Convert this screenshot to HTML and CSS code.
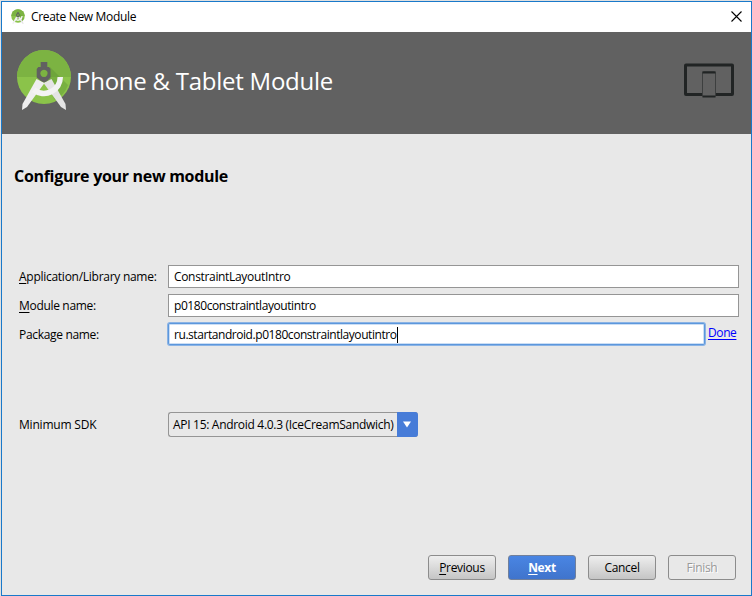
FILE: index.html
```html
<!DOCTYPE html>
<html lang="en">
<head>
<meta charset="utf-8">
<title>Create New Module</title>
<link rel="stylesheet" href="styles.css">
</head>
<body>
<svg width="0" height="0" class="defs" aria-hidden="true">
  <symbol id="studio" viewBox="0 0 56 62">
    <circle cx="28" cy="28" r="27" fill="#8bc34a"/>
    <path d="M1 28a27 27 0 0 1 54 0z" fill="#7cb342"/>
    <path d="M34 18l18 18a27 27 0 0 1-13 15L28 33z" fill="#558b2f" opacity=".35"/>
    <path d="M20.500 30l8 4L11 58l-5 3 .5-6z" fill="#eee"/>
    <path d="M35.500 30l-8 4L45 58l5 3-.5-6z" fill="#e4e4e4"/>
    <path d="M47 28A19 19 0 0 1 16 43l3.500-4.500A13.500 13.500 0 0 0 41.500 28z" fill="#f3f3f3"/>
    <path fill-rule="evenodd" d="M24.700 13h6.600v5h1.700l1.500 2v8.500L31 32l-3 1.500-3-1.500-4.300-3.500V20l1.600-2h2.400zm3.300 7.700a3.700 3.700 0 1 0 .01 0z" fill="#616161"/>
  </symbol>
</svg>
<div class="window">
  <div class="titlebar">
    <svg class="app-icon"><use href="#studio"/></svg>
    <span class="caption">Create New Module</span>
    <svg class="close" viewBox="0 0 11 11"><path d="M.5.5l10 10M10.500.5l-10 10" stroke="#000" stroke-width="1.100" fill="none"/></svg>
  </div>
  <header class="banner">
    <svg class="logo"><use href="#studio"/></svg>
    <h1>Phone &amp; Tablet Module</h1>
    <svg class="devices" viewBox="0 0 52 36">
      <rect x="2.500" y="2" width="47" height="29.500" rx=".5" fill="none" stroke="#212424" stroke-width="3"/>
      <rect x="19.500" y="8.500" width="13" height="25" rx="1" fill="#616161" stroke="#3d3f3f"/>
      <path d="M19.500 9.500h13M19.500 33.500h13" stroke="#212424" stroke-width="2"/>
    </svg>
  </header>
  <main>
    <h2>Configure your new module</h2>
    <div class="fields">
      <div class="row"><label class="l-app"><u>A</u>pplication/Library name:</label><div class="input"><span class="v-app">ConstraintLayoutIntro</span></div></div>
      <div class="row"><label class="l-mod"><u>M</u>odule name:</label><div class="input"><span class="v-mod">p0180constraintlayoutintro</span></div></div>
      <div class="row"><label class="l-mod">Package name:</label><div class="input focused"><span class="v-pkg">ru.startandroid.p0180constraintlayoutintro</span><i class="caret"></i></div><a class="done">Done</a></div>
    </div>
    <div class="row sdk"><label class="l-sdk">Minimum SDK</label>
      <div class="combo"><span class="v-sdk">API 15: Android 4.0.3 (IceCreamSandwich)</span><b class="arrow"><svg viewBox="0 0 8 7"><path d="M0 .5h8l-4 6z" fill="#fff"/></svg></b></div>
    </div>
    <footer>
      <div class="button"><span><u>P</u>revious</span></div>
      <div class="button primary"><span><u>N</u>ext</span></div>
      <div class="button"><span>Cancel</span></div>
      <div class="button disabled"><span>Finish</span></div>
    </footer>
  </main>
</div>
</body>
</html>
```
FILE: styles.css
```css
* { box-sizing: border-box; }
body { margin: 0; width: 752px; height: 596px; overflow: hidden; background: #e0e0e0; font: 12px/16px "Open Sans", "Noto Sans", sans-serif; color: #000; padding: 1px 0 0 1px; }
.defs { display: none; }
.window { width: 751px; height: 595px; border: 1px solid #1979ca; background: #e8e8e8; display: flex; flex-direction: column; }
.titlebar { height: 30px; background: #fff; display: flex; align-items: center; padding: 0 9.500px 0 9px; }
.app-icon { width: 14px; height: 15.500px; }
.caption { margin-left: 6px; letter-spacing: -.33px; white-space: nowrap; }
.close { width: 11px; height: 11px; margin: -1px 0 0 auto; }
.banner { height: 102px; background: #616161; display: flex; align-items: center; padding: 0 16px 0 14px; }
.logo { width: 56px; height: 62px; margin-top: -6px; }
h1 { margin: -4px 0 0 4px; font-size: 24px; line-height: 32px; font-weight: 400; letter-spacing: -.25px; color: #fff; white-space: nowrap; }
.devices { width: 52px; height: 36px; margin: -4px 0 0 auto; }
main { flex: 1; display: flex; flex-direction: column; }
h2 { margin: 31px 0 0 12px; font-size: 16px; line-height: 22px; font-weight: 700; letter-spacing: -.3px; white-space: nowrap; }
.fields { margin-top: 78px; display: flex; flex-direction: column; gap: 6px; }
.row { display: flex; align-items: center; height: 23px; padding: 0 12px 0 17px; white-space: nowrap; }
label { width: 149px; flex: none; }
.l-app { letter-spacing: -.27px; }
.l-mod { letter-spacing: -.32px; }
.l-sdk { letter-spacing: -.2px; }
.v-app { letter-spacing: -.33px; }
.v-mod { letter-spacing: -.42px; }
.v-pkg { letter-spacing: -.44px; }
.v-sdk { letter-spacing: -.3px; }
u { text-decoration: underline; text-underline-offset: 2px; text-decoration-thickness: 1px; text-decoration-skip-ink: none; }
.input { flex: 1; height: 23px; border: 1px solid #959595; background: #fff; display: flex; align-items: center; padding-left: 5px; }
.input.focused { height: 22px; padding-top: 1px; margin-top: -1px; border-color: #5c97dc; border-radius: 2px; box-shadow: 0 0 0 1px #8ab3e5, inset 0 0 0 1px #cbdef5; flex: 0 0 537px; }
.caret { width: 1px; height: 16px; background: #000; }
.done { color: #00f; margin: -3px 0 0 3px; letter-spacing: -.4px; text-decoration: underline; text-underline-offset: 2px; text-decoration-thickness: 1px; }
.sdk { margin-top: 66px; height: 25px; }
.combo { width: 250px; height: 25px; border: 1px solid #959595; border-right: 0; border-radius: 3px; display: flex; align-items: center; padding-left: 4px; }
.combo span { flex: 1; }
.arrow { width: 21px; height: 25px; flex: none; background: #477cd8; border-radius: 0 3px 3px 0; display: flex; align-items: center; justify-content: center; }
.arrow svg { width: 8px; height: 7px; margin-right: 1px; }
footer { margin-top: auto; margin-bottom: 15px; padding-right: 15px; display: flex; justify-content: flex-end; gap: 12px; }
.button { width: 68px; height: 25px; border: 1px solid #8c8c8c; border-radius: 3px; background: linear-gradient(#eee, #c5c5c5); display: flex; align-items: center; justify-content: center; letter-spacing: -.32px; }
.primary { background: linear-gradient(#4985e3, #4074cc); color: #fff; font-weight: 700; border-color: #71809b; }
.disabled { background: none; color: #999; text-shadow: 1px 1px #fff; }
```
